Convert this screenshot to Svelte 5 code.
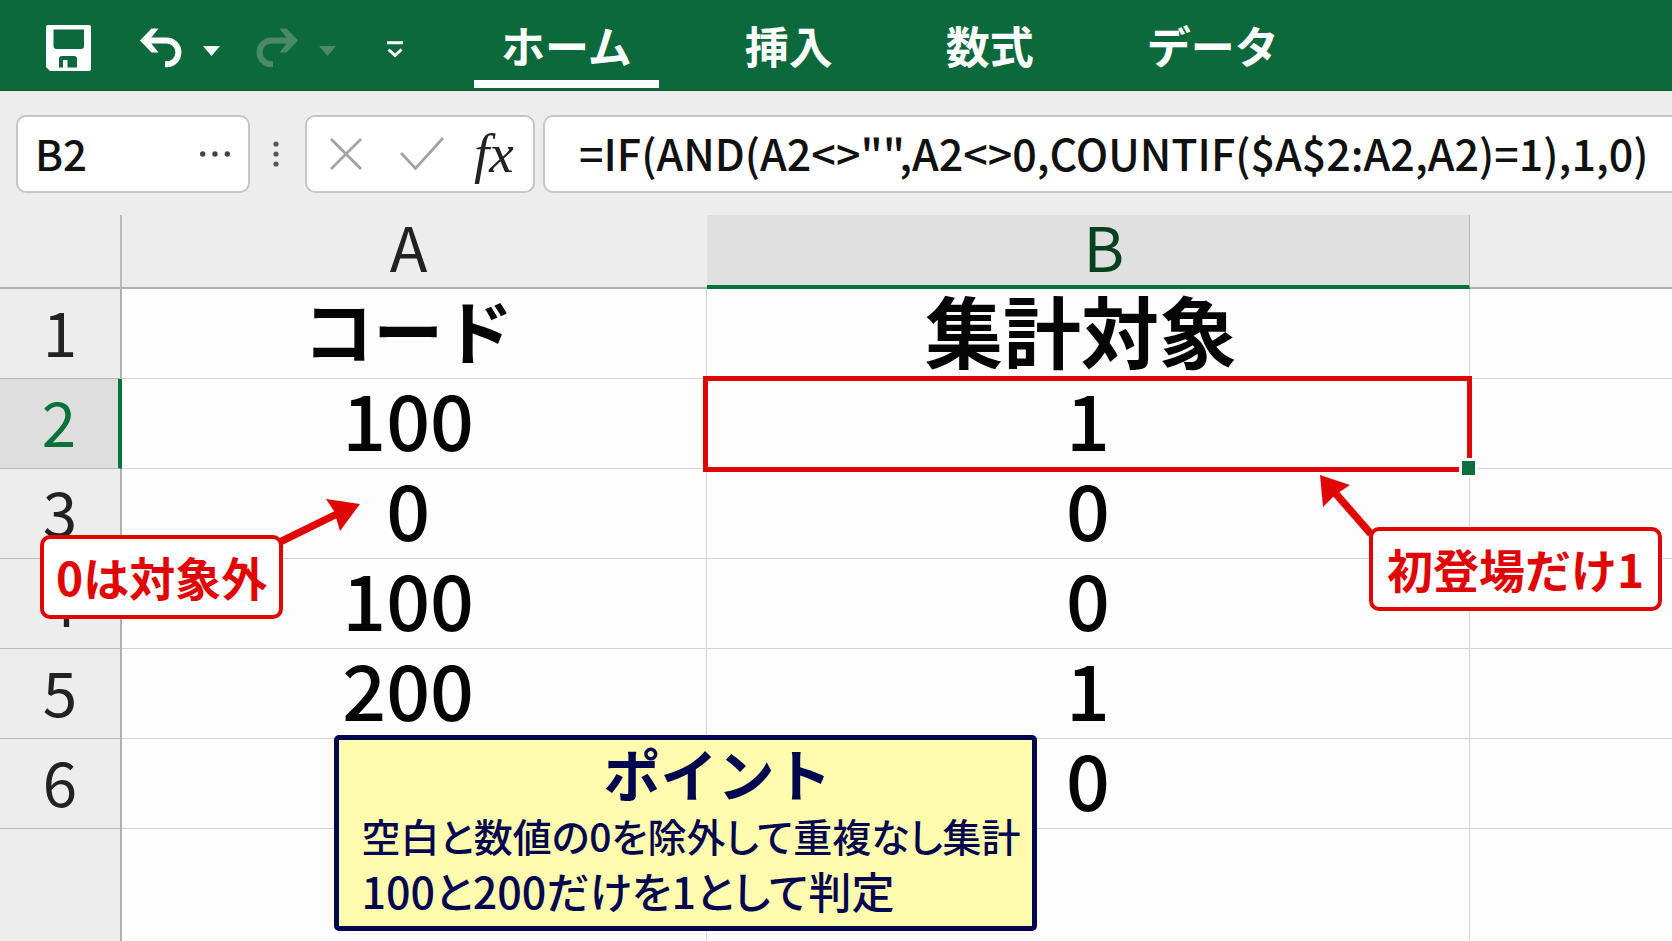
<script>
  let cellName = $state('B2');
  let formula = $state('=IF(AND(A2<>"",A2<>0,COUNTIF($A$2:A2,A2)=1),1,0)');
  let activeTab = $state('ホーム');

  const tabs = ['ホーム', '挿入', '数式', 'データ'];
  const rows = [
    { n: 1, a: 'コード', b: '集計対象' },
    { n: 2, a: '100', b: '1' },
    { n: 3, a: '0', b: '0' },
    { n: 4, a: '100', b: '0' },
    { n: 5, a: '200', b: '1' },
    { n: 6, a: '', b: '0' }
  ];
  const selectedRow = 2;
</script>

<div class="app">
  <header class="ribbon">
    <div class="quick">
      <button class="save" aria-label="上書き保存">
        <svg width="45" height="46" viewBox="0 0 45 46">
          <path fill="#fff" fill-rule="evenodd" d="M2 0H43a2 2 0 0 1 2 2V44a2 2 0 0 1-2 2H4L0 42V2a2 2 0 0 1 2-2ZM7.500 4.500V21a3 3 0 0 0 3 3H35a3 3 0 0 0 3-3V4.500ZM13 42.500H17V35H21.500V42.500H31V34a3 3 0 0 0-3-3H16a3 3 0 0 0-3 3Z" />
        </svg>
      </button>
      <button class="undo" aria-label="元に戻す">
        <svg width="42" height="40" viewBox="0 0 42 40">
          <path fill="none" stroke="#fff" stroke-width="6" d="M4 12.500H26.500a11.800 11.800 0 0 1 0 23.800H25" />
          <path fill="#fff" d="M0 12.500 11.500 0.500H18.500L9 12.500 18.500 24.500H11.500Z" />
        </svg>
      </button>
      <button class="caret" aria-label="元に戻す履歴">
        <svg width="17" height="10" viewBox="0 0 17 10"><path fill="#fff" d="M0 0H17L8.500 10Z" /></svg>
      </button>
      <button class="redo" aria-label="やり直し" disabled>
        <svg width="42" height="40" viewBox="0 0 42 40">
          <g transform="matrix(-1 0 0 1 42 0)">
            <path fill="none" stroke="#4a8a68" stroke-width="6" d="M4 12.500H26.500a11.800 11.800 0 0 1 0 23.800H25" />
            <path fill="#4a8a68" d="M0 12.500 11.500 0.500H18.500L9 12.500 18.500 24.500H11.500Z" />
          </g>
        </svg>
      </button>
      <button class="caret" aria-label="やり直し履歴" disabled>
        <svg width="17" height="10" viewBox="0 0 17 10"><path fill="#4a8a68" d="M0 0H17L8.500 10Z" /></svg>
      </button>
      <button class="customize" aria-label="クイックアクセスのカスタマイズ">
        <svg width="16" height="17" viewBox="0 0 16 17">
          <path fill="none" stroke="#fff" stroke-width="3" d="M0 1.800H16M1.500 8.500 8 14.500 14.500 8.500" />
        </svg>
      </button>
    </div>
    <nav class="tabs">
      {#each tabs as tab}
        <button class="tab" class:active={tab === activeTab} onclick={() => (activeTab = tab)}>{tab}</button>
      {/each}
    </nav>
  </header>

  <section class="formula-bar">
    <div class="box name-box">
      <input aria-label="名前ボックス" bind:value={cellName} />
      <button aria-label="名前の一覧">
        <svg width="30" height="6" viewBox="0 0 30 6" fill="#444">
          <circle cx="2.700" cy="3" r="2.700" /><circle cx="15" cy="3" r="2.700" /><circle cx="27.300" cy="3" r="2.700" />
        </svg>
      </button>
    </div>
    <svg class="grip" width="6" height="26" viewBox="0 0 6 26" fill="#555">
      <circle cx="3" cy="3" r="2.600" /><circle cx="3" cy="13" r="2.600" /><circle cx="3" cy="23" r="2.600" />
    </svg>
    <div class="box actions">
      <button aria-label="キャンセル">
        <svg width="32" height="32" viewBox="0 0 32 32"><path fill="none" stroke="#a3a3a3" stroke-width="2.800" d="M1 1 31 31M31 1 1 31" /></svg>
      </button>
      <button aria-label="入力">
        <svg width="44" height="34" viewBox="0 0 44 34"><path fill="none" stroke="#a3a3a3" stroke-width="2.800" d="M1 16 15.500 31.500 43 1" /></svg>
      </button>
      <button class="fx" aria-label="関数の挿入">fx</button>
    </div>
    <div class="box formula">
      <input aria-label="数式バー" bind:value={formula} />
    </div>
  </section>

  <main class="sheet">
    <table>
      <colgroup>
        <col class="col-n" /><col class="col-a" /><col class="col-b" /><col />
      </colgroup>
      <thead>
        <tr>
          <th class="corner"></th>
          <th class="a">A</th>
          <th class="selected">B</th>
          <th></th>
        </tr>
      </thead>
      <tbody>
        {#each rows as row}
          <tr class:title={row.n === 1}>
            <th class:selected={row.n === selectedRow}>{row.n}</th>
            <td class="a">{row.a}</td>
            <td class="b">
              {row.b}
              {#if row.n === selectedRow}
                <div class="selection"><i></i></div>
              {/if}
            </td>
            <td></td>
          </tr>
        {/each}
        <tr class="rest"><th></th><td></td><td></td><td></td></tr>
      </tbody>
    </table>

    <div class="callout zero">
      0は対象外
      <svg width="82" height="46" viewBox="0 0 82 46">
        <path stroke="#e00606" stroke-width="7.500" d="M0 43 58 14.500" />
        <path fill="#e00606" d="M80 5 46 0 54 12 60 32Z" />
      </svg>
    </div>

    <div class="callout first">
      初登場だけ1
      <svg width="56" height="64" viewBox="0 0 56 64">
        <path stroke="#e00606" stroke-width="7.500" d="M52 59 11 12" />
        <path fill="#e00606" d="M1 0 31 10 16 20 4 32Z" />
      </svg>
    </div>

    <aside class="point">
      <h2>ポイント</h2>
      <p>空白と数値の0を除外して重複なし集計</p>
      <p class="wide">100と200だけを1として判定</p>
    </aside>
  </main>
</div>

<style>
  :global(body) {
    margin: 0;
    background: #fdfdfd;
  }

  .app {
    min-height: 100vh;
    overflow: hidden;
    display: flex;
    flex-direction: column;
    font-family: "Noto Sans CJK JP", sans-serif;
    color: #111;
  }

  button,
  input {
    font: inherit;
    color: inherit;
    border: 0;
    padding: 0;
    background: none;
  }

  svg {
    display: block;
  }

  .ribbon {
    display: flex;
    height: 91px;
    box-sizing: border-box;
    border-bottom: 1px solid #0a5a32;
    padding-left: 46px;
    background: #0c693b;
    color: #fff;
  }

  .quick {
    display: flex;
    align-items: center;
    padding-top: 5px;
  }

  .undo {
    margin-left: 49px;
  }

  .caret {
    margin-left: 21px;
    padding-top: 6px;
  }

  .redo {
    margin-left: 36px;
  }

  .customize {
    margin-left: 51px;
    padding-top: 4px;
  }

  .tabs {
    display: flex;
    gap: 59px;
    margin-left: 71px;
  }

  .tab {
    height: 88px;
    padding: 10px 27px 0;
    border-bottom: 8px solid transparent;
    font-size: 44px;
    font-weight: 700;
    line-height: 70px;
    white-space: nowrap;
  }

  .tab.active {
    border-color: #fff;
  }

  .formula-bar {
    display: flex;
    align-items: center;
    height: 124px;
    box-sizing: border-box;
    padding: 2px 0 0 16px;
    background: #ededed;
    font-size: 43px;
    font-weight: 500;
  }

  .box {
    display: flex;
    align-items: center;
    height: 78px;
    box-sizing: border-box;
    border: 2px solid #c6c6c6;
    border-radius: 10px;
    background: #fff;
  }

  .box input {
    height: 68px;
    padding-bottom: 4px;
    box-sizing: border-box;
  }

  .name-box {
    width: 234px;
    padding: 0 18px 0 17px;
    font-size: 42px;
  }

  .name-box input {
    flex: 1;
    min-width: 0;
  }

  .grip {
    margin: 0 26px 0 23px;
  }

  .actions {
    width: 230px;
    padding: 0 0 0 23px;
    gap: 38px;
  }

  .fx {
    margin-left: -8px;
    font-family: "Liberation Serif", serif;
    font-style: italic;
    font-size: 55px;
    font-weight: 400;
    line-height: 60px;
    color: #222;
  }

  .formula {
    flex: 1;
    margin-left: 8px;
    border-right: 0;
    border-radius: 10px 0 0 10px;
    padding-left: 34px;
  }

  .formula input {
    width: 100%;
  }

  .sheet {
    position: relative;
    flex: 1;
  }

  table {
    width: 100%;
    table-layout: fixed;
    border-collapse: separate;
    border-spacing: 0;
  }

  .col-n {
    width: 7.3%;
  }

  .col-a {
    width: 35%;
  }

  .col-b {
    width: 45.6%;
  }

  th,
  td {
    position: relative;
    height: 90px;
    box-sizing: border-box;
    padding: 0;
    vertical-align: top;
    text-align: center;
    white-space: nowrap;
  }

  th {
    background: #ededed;
    color: #222;
    font-size: 62px;
    font-weight: 400;
    line-height: 83px;
  }

  td {
    border-right: 1px solid #d4d4d4;
    border-bottom: 1px solid #d4d4d4;
    color: #050505;
    font-size: 77px;
    font-weight: 500;
    line-height: 77px;
  }

  .a {
    padding-right: 12px;
  }

  td:last-child {
    border-right: 0;
  }

  thead th {
    height: 74px;
    border-bottom: 2px solid #b0b0b0;
    line-height: 60px;
  }

  thead .corner {
    border-right: 2px solid #b8b8b8;
  }

  thead .selected {
    padding-left: 32px;
    border-bottom: 4px solid #07733a;
    border-right: 1px solid #b8b8b8;
    background: #e0e0e0;
    color: #07401f;
  }

  tbody th {
    border-right: 2px solid #b0b0b0;
    border-bottom: 1px solid #b8b8b8;
  }

  tbody .selected {
    border-right: 4px solid #07733a;
    background: #dedede;
    color: #07733a;
  }

  .title td {
    font-size: 70px;
    font-weight: 700;
    line-height: 80px;
  }

  .title .b {
    padding-right: 14px;
    font-size: 78px;
  }

  .rest th,
  .rest td {
    height: 112px;
    border-bottom: 0;
  }

  .selection {
    position: absolute;
    inset: -3px -3px -4px -4px;
    z-index: 1;
    border: 5px solid #e00606;
  }

  .selection i {
    position: absolute;
    right: -11px;
    bottom: -11px;
    width: 13px;
    height: 14px;
    border: 3px solid #fdfdfd;
    background: #0c6e3c;
  }

  .callout {
    position: absolute;
    z-index: 2;
    box-sizing: border-box;
    height: 84px;
    border: 4px solid #e00606;
    border-radius: 10px;
    background: #fff;
    color: #e00606;
    font-size: 46px;
    font-weight: 700;
    line-height: 74px;
    text-align: center;
    white-space: nowrap;
  }

  .callout svg {
    position: absolute;
  }

  .zero {
    top: 320px;
    left: 2.4%;
    width: 243px;
  }

  .zero svg {
    top: -40px;
    left: 236px;
  }

  .first {
    top: 312px;
    right: 10px;
    width: 293px;
  }

  .first svg {
    top: -56px;
    left: -54px;
  }

  .point {
    position: absolute;
    z-index: 2;
    top: 520px;
    left: 20%;
    width: 42%;
    height: 196px;
    box-sizing: border-box;
    border: 5px solid #030750;
    border-radius: 5px;
    padding-left: 22px;
    background: #fffbae;
    color: #030750;
    white-space: nowrap;
  }

  h2 {
    margin: 0;
    padding: 0 0 4px 42px;
    font-size: 57px;
    font-weight: 700;
    line-height: 64px;
    text-align: center;
  }

  p {
    margin: 0;
    font-size: 39px;
    font-weight: 500;
    line-height: 55px;
    font-feature-settings: "palt";
  }

  .wide {
    font-size: 43px;
  }
</style>
